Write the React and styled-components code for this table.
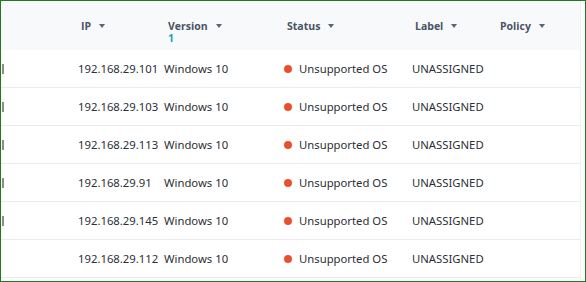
import React from 'react';
import styled, { createGlobalStyle } from 'styled-components';

const GlobalStyle = createGlobalStyle`
  html, body {
    margin: 0;
    padding: 0;
    background: #ffffff;
  }
`;

const Frame = styled.div`
  box-sizing: border-box;
  width: 586px;
  height: 282px;
  border: 1px solid #1f7a1f;
  background: #ffffff;
  overflow: hidden;
  padding-right: 4px;
`;

const Table = styled.div`
  height: 100%;
  border-right: 1px solid #eef0f2;
  display: flex;
  flex-direction: column;
`;

const cols = '77px 86px 120px 128px 86px 1fr';

const HeaderRow = styled.div`
  display: grid;
  grid-template-columns: ${cols};
  height: 49px;
  background: #f8f9fb;
  font-family: "Open Sans", "Noto Sans", sans-serif;
  font-weight: 700;
  font-size: 10.5px;
  color: #4a5464;
`;

const HeadCell = styled.div`
  position: relative;
  display: flex;
  align-items: center;
  padding-left: ${p => p.$pad || 0}px;
`;

const HeadLabel = styled.span`
  display: inline-flex;
  align-items: center;
  gap: 8px;
`;

const Caret = styled.span`
  width: 0;
  height: 0;
  border-left: 3.5px solid transparent;
  border-right: 3.5px solid transparent;
  border-top: 4px solid #5a6474;
`;

const SortIndex = styled.span`
  position: absolute;
  left: ${p => p.$pad || 0}px;
  top: 30px;
  color: #1aa3b5;
  font-size: 10.5px;
`;

const Row = styled.div`
  display: grid;
  grid-template-columns: ${cols};
  height: 37px;
  border-bottom: 1px solid #e9ebee;
  font-family: "Noto Sans", "Open Sans", sans-serif;
  font-size: 11.3px;
  color: #2b2f36;
  align-items: center;
`;

const Cell = styled.div`
  display: flex;
  align-items: center;
  white-space: nowrap;
  padding-left: ${p => p.$pad || 0}px;
`;

const EdgeMark = styled.span`
  width: 2px;
  height: 10px;
  margin-left: 1px;
  background: #8a8f86;
`;

const Dot = styled.span`
  width: 8px;
  height: 8px;
  border-radius: 50%;
  background: #e8502e;
  margin-right: 7px;
`;

const rows = [
  { ip: '192.168.29.101', mark: true },
  { ip: '192.168.29.103', mark: true },
  { ip: '192.168.29.113', mark: true },
  { ip: '192.168.29.91', mark: true },
  { ip: '192.168.29.145', mark: true },
  { ip: '192.168.29.112', mark: false },
];

const headers = [
  { label: 'IP', pad: 3 },
  { label: 'Version', pad: 4, sort: 1 },
  { label: 'Status', pad: 3 },
  { label: 'Label', pad: 3 },
  { label: 'Policy', pad: 2 },
];

export default function App() {
  return (
    <Frame>
      <GlobalStyle />
      <Table>
        <HeaderRow>
          <HeadCell />
          {headers.map(h => (
            <HeadCell key={h.label} $pad={h.pad}>
              <HeadLabel>{h.label}<Caret /></HeadLabel>
              {h.sort && <SortIndex $pad={h.pad}>{h.sort}</SortIndex>}
            </HeadCell>
          ))}
        </HeaderRow>
        {rows.map(r => (
          <Row key={r.ip}>
            <Cell>{r.mark && <EdgeMark />}</Cell>
            <Cell>{r.ip}</Cell>
            <Cell>Windows 10</Cell>
            <Cell><Dot />Unsupported OS</Cell>
            <Cell>UNASSIGNED</Cell>
            <Cell />
          </Row>
        ))}
      </Table>
    </Frame>
  );
}
